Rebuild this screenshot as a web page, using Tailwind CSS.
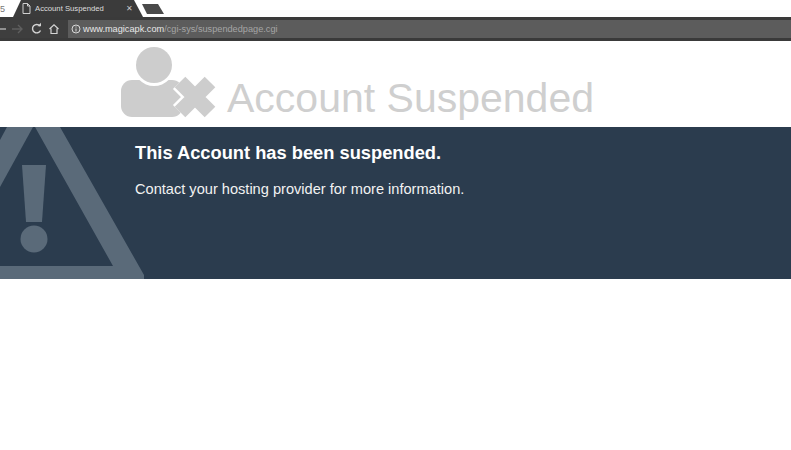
<!DOCTYPE html>
<html lang="en">
<head>
    <meta charset="UTF-8">
    <title>Account Suspended</title>
    <script src="https://cdn.jsdelivr.net/npm/@tailwindcss/browser@4"></script>
</head>
<body class="bg-white h-[450px] overflow-hidden font-['Liberation_Sans',Arial,sans-serif]">
    <!-- Tab strip -->
    <div class="h-[17px] bg-white relative">
        <svg class="absolute left-0 top-0" width="180" height="17" viewBox="0 0 180 17">
            <path d="M13 17 L21 0 L134 0 L143 17 Z" fill="#3b3b3b"/>
            <path d="M142 4 L158 4 L164 14 L147 14 Z" fill="#4a4a4a"/>
        </svg>
        <svg class="absolute left-[22px] top-[3px]" width="9" height="11" viewBox="0 0 9 11" fill="none" stroke="#cfcfcf" stroke-width="1">
            <path d="M1 .5H5.5L8 3V10.5H1Z M5.5 .5V3H8"/>
        </svg>
        <span class="absolute left-[35px] top-[3px] text-[7.7px] leading-[12px] text-[#dedede] whitespace-nowrap">Account Suspended</span>
        <span class="absolute left-[126px] top-[3px] text-[8px] leading-[11px] text-[#c8c8c8]">✕</span>
        <span class="absolute left-0 top-[4px] text-[9px] leading-[10px] text-[#777]">5</span>
    </div>

    <!-- Toolbar -->
    <div class="h-[24px] bg-[#3e3e3e] border-t-[3px] border-b-[3px] border-t-[#3a3a3a] border-b-[#3a3a3a] flex items-center">
        <svg class="shrink-0" width="64" height="20" viewBox="0 0 64 20" fill="none">
            <path d="M0 10H6" stroke="#b5b5b5" stroke-width="1.4"/>
            <path d="M12 10H22M18 6L22 10L18 14" stroke="#5f5f5f" stroke-width="1.4"/>
            <path d="M40 7A4.2 4.2 0 1 0 40.5 11.5" stroke="#d4d4d4" stroke-width="1.4"/>
            <path d="M37.5 7.2H41V3.8Z" fill="#d4d4d4"/>
            <path d="M49.5 10L54 5.8L58.5 10M51 9.5V14.5H57V9.5" stroke="#d4d4d4" stroke-width="1.2"/>
        </svg>
        <div class="ml-[4px] flex-1 h-[18px] bg-[#5c5c5c] flex items-center pl-[3px]">
            <svg class="shrink-0" width="10" height="10" viewBox="0 0 10 10" fill="none" stroke="#d8d8d8">
                <circle cx="5" cy="5" r="4"/>
                <path d="M5 4.5V7.5M5 2.5V3.5"/>
            </svg>
            <span class="ml-[2px] mt-[1px] text-[9.2px] leading-none text-[#e8e8e8] whitespace-nowrap">www.magicapk.com<span class="text-[#a5a5a5]">/cgi-sys/suspendedpage.cgi</span></span>
        </div>
    </div>

    <!-- Heading -->
    <div class="h-[86px] pl-[121px] flex items-start">
        <svg class="mt-[6px] shrink-0" width="96" height="72" viewBox="0 0 96 72">
            <rect x="0" y="33" width="62" height="37" rx="11" fill="#cdcdcd"/>
            <circle cx="33" cy="18" r="21" fill="#fff"/>
            <circle cx="33" cy="18" r="18" fill="#cdcdcd"/>
            <path d="M59 35 L89 65 M89 35 L59 65" stroke="#fff" stroke-width="20"/>
            <path d="M59 35 L89 65 M89 35 L59 65" stroke="#cdcdcd" stroke-width="15"/>
        </svg>
        <h1 class="ml-[10px] mt-[30px] text-[41px] leading-[54px] text-[#cfcfcf] whitespace-nowrap">Account Suspended</h1>
    </div>

    <!-- Banner -->
    <div class="relative h-[152px] bg-[#2b3c4e] overflow-hidden pl-[135px] pt-[15px]">
        <svg class="absolute left-0 top-0" width="146" height="152" viewBox="0 0 146 152">
            <path d="M7 0 H33 L0 60 V13 Z" fill="#5a6a79"/>
            <path d="M35 0 H60 L144 148 V152 H0 V139 H113 Z" fill="#5a6a79"/>
            <path d="M22 38 H46 L42 95 H26 Z" fill="#5a6a79"/>
            <circle cx="34" cy="112" r="13.5" fill="#5a6a79"/>
        </svg>
        <h2 class="relative text-[18.3px] leading-[22px] font-bold text-white whitespace-nowrap">This Account has been suspended.</h2>
        <p class="relative mt-[16px] text-[14.6px] leading-[18px] text-[#f2f2f2] whitespace-nowrap">Contact your hosting provider for more information.</p>
    </div>
</body>
</html>
